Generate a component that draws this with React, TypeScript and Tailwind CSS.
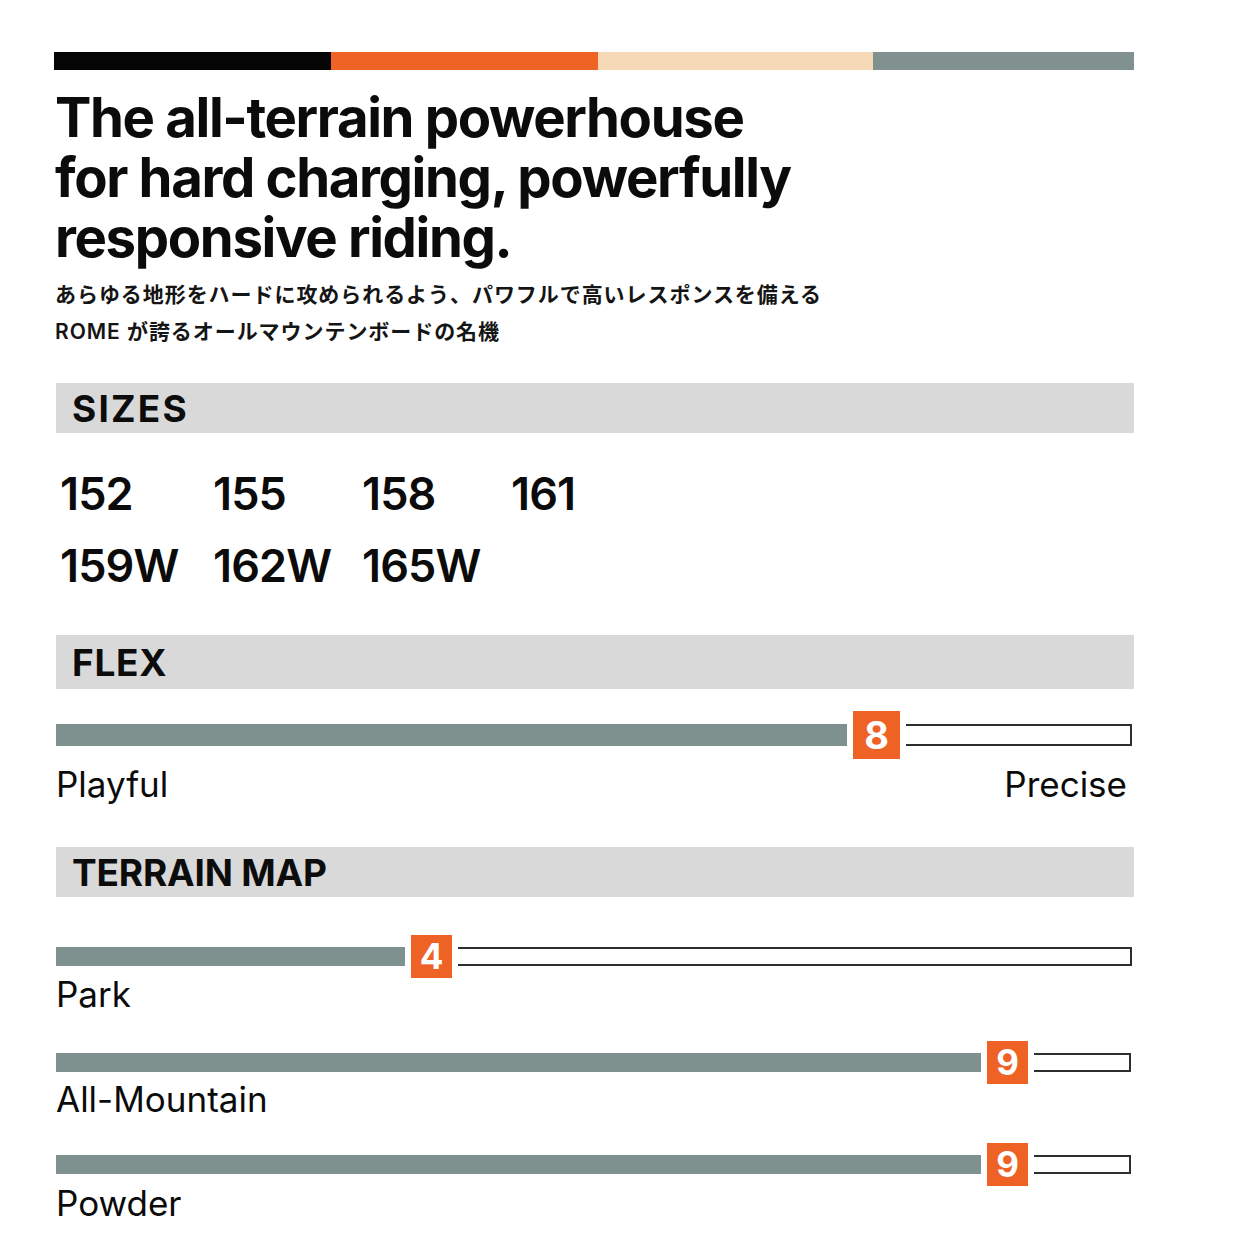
import React from "react";

function Slider({
  value,
  barCls,
  restCls,
  boxCls,
  barH,
  numCls,
}: {
  value: number;
  barCls: string;
  restCls: string;
  boxCls: string;
  barH: string;
  numCls: string;
}) {
  return (
    <div className="flex items-center">
      <div className={`${barCls} ${barH} bg-[#7f918f]`} />
      <div className={`${boxCls} ml-[6px] flex items-center justify-center bg-[#ee6226] text-white font-bold ${numCls}`}>
        {value}
      </div>
      <div className={`${restCls} ${barH} ml-[6px] border-y-2 border-r-2 border-[#2e2e2e] bg-white`} />
    </div>
  );
}

function Header({ title, h, track }: { title: string; h: string; track: string }) {
  return (
    <div className={`${h} w-[1078px] bg-[#d9d9d9] flex items-center pl-[16px]`}>
      <span className={`text-[37px] leading-none font-bold text-[#0c0c0c] ${track}`}>{title}</span>
    </div>
  );
}

export default function App() {
  const sizes1 = ["152", "155", "158", "161"];
  const sizes2 = ["159W", "162W", "165W"];
  return (
    <div
      className="w-[1254px] h-[1254px] bg-white text-[#0b0b0b] overflow-hidden"
      style={{ fontFamily: "Inter, 'Noto Sans CJK JP', sans-serif" }}
    >
      <div className="pt-[52px] pl-[54px]">
        <div className="flex h-[18px] w-[1080px]">
          <div className="w-[277px] bg-[#050505]" />
          <div className="w-[267px] bg-[#ef6325]" />
          <div className="w-[275px] bg-[#f6d9b6]" />
          <div className="flex-1 bg-[#80918f]" />
        </div>

        <h1 className="mt-[17px] text-[54.5px] leading-[60px] font-bold tracking-[-0.025em] pl-[1px]">
          The all-terrain powerhouse
          <br />
          for hard charging, powerfully
          <br />
          responsive riding.
        </h1>

        <div className="mt-[9px] pl-[1px] text-[21px] leading-[37px] font-semibold tracking-[0.045em] text-[#151515]">
          <div>あらゆる地形をハードに攻められるよう、パワフルで高いレスポンスを備える</div>
          <div>ROME が誇るオールマウンテンボードの名機</div>
        </div>

        <div className="mt-[33px] pl-[2px]">
          <Header title="SIZES" h="h-[50px]" track="tracking-[0.06em]" />
          <div className="pt-[25px] text-[45px] leading-[72px] font-semibold tracking-[-0.02em]">
            <div className="grid grid-cols-[153px_149px_149px_149px] pl-[4px]">
              {sizes1.map((s) => (
                <div key={s}>{s}</div>
              ))}
            </div>
            <div className="grid grid-cols-[153px_149px_149px_149px] pl-[4px]">
              {sizes2.map((s) => (
                <div key={s}>{s}</div>
              ))}
            </div>
          </div>

          <div className="mt-[33px]">
            <Header title="FLEX" h="h-[54px]" track="tracking-[0.02em]" />
          </div>
          <div className="mt-[22px]">
            <Slider
              value={8}
              barCls="w-[791px]"
              restCls="w-[226px]"
              boxCls="w-[47px] h-[48px]"
              barH="h-[22px]"
              numCls="text-[38px]"
            />
          </div>
          <div className="mt-[5px] flex justify-between w-[1071px] text-[35px] leading-[40px]">
            <span>Playful</span>
            <span>Precise</span>
          </div>

          <div className="mt-[43px]">
            <Header title="TERRAIN MAP" h="h-[50px]" track="tracking-[-0.005em]" />
          </div>

          <div className="mt-[38px]">
            <Slider
              value={4}
              barCls="w-[349px]"
              restCls="w-[674px]"
              boxCls="w-[41px] h-[43px]"
              barH="h-[19px]"
              numCls="text-[35px]"
            />
          </div>
          <div className="-mt-[2px] text-[35px] leading-[36px]">Park</div>

          <div className="mt-[29px]">
            <Slider
              value={9}
              barCls="w-[925px]"
              restCls="w-[97px]"
              boxCls="w-[41px] h-[43px]"
              barH="h-[19px]"
              numCls="text-[35px]"
            />
          </div>
          <div className="-mt-[3px] text-[35px] leading-[36px]">All-Mountain</div>

          <div className="mt-[26px]">
            <Slider
              value={9}
              barCls="w-[925px]"
              restCls="w-[97px]"
              boxCls="w-[41px] h-[43px]"
              barH="h-[19px]"
              numCls="text-[35px]"
            />
          </div>
          <div className="-mt-[1px] text-[35px] leading-[36px]">Powder</div>
        </div>
      </div>
    </div>
  );
}
